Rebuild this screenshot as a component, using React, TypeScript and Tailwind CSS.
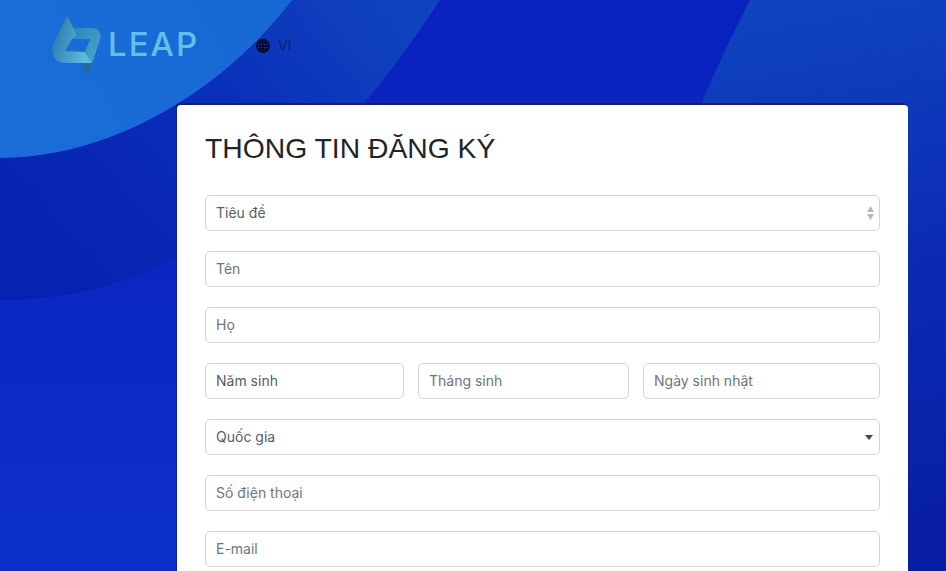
const inter = "font-['Inter',sans-serif]";
const fieldClass = `block h-9 w-full rounded-[5px] border border-[#d6d6d6] bg-white px-2.5 pb-[2px] text-[14px] text-[#565d64] outline-none placeholder:text-[#6c757d] ${inter}`;

function Field({ label, dark }: { label: string; dark?: boolean }) {
  return (
    <input
      className={dark ? `${fieldClass} placeholder:text-[#565d64]` : fieldClass}
      placeholder={label}
      aria-label={label}
    />
  );
}

function SelectBox({ label, arrow }: { label: string; arrow: "updown" | "down" }) {
  return (
    <div className="relative">
      <select className={`${fieldClass} appearance-none`} aria-label={label} defaultValue={label}>
        <option>{label}</option>
      </select>
      {arrow === "updown" ? (
        <svg className="pointer-events-none absolute right-[5px] top-[11px]" width="9" height="14" viewBox="0 0 9 14">
          <path d="M4.5 0 L8 6 H1 Z M1 8 H8 L4.5 14 Z" fill="#b8b8b8" />
        </svg>
      ) : (
        <svg className="pointer-events-none absolute right-[7px] top-[16px]" width="8" height="5" viewBox="0 0 8 5">
          <path d="M0 0 H8 L4 5 Z" fill="#444" />
        </svg>
      )}
    </div>
  );
}

function Backdrop() {
  return (
    <svg className="absolute inset-0 h-full w-full" viewBox="0 0 946 571" preserveAspectRatio="none">
      <defs>
        <linearGradient id="base" gradientUnits="userSpaceOnUse" x1="0" y1="0" x2="0" y2="571">
          <stop offset="0" stopColor="#0a22bf" />
          <stop offset="0.55" stopColor="#0a28c2" />
          <stop offset="1" stopColor="#0d30ca" />
        </linearGradient>
        <linearGradient id="right" gradientUnits="userSpaceOnUse" x1="800" y1="0" x2="900" y2="571">
          <stop offset="0" stopColor="#0f44bf" />
          <stop offset="0.45" stopColor="#0b2bb4" />
          <stop offset="1" stopColor="#071da2" />
        </linearGradient>
        <linearGradient id="mid" gradientUnits="userSpaceOnUse" x1="420" y1="20" x2="100" y2="300">
          <stop offset="0" stopColor="#1044be" />
          <stop offset="0.45" stopColor="#0a30ba" />
          <stop offset="1" stopColor="#0722b2" />
        </linearGradient>
        <linearGradient id="top" gradientUnits="userSpaceOnUse" x1="0" y1="158" x2="292" y2="0">
          <stop offset="0" stopColor="#1a6dd6" />
          <stop offset="1" stopColor="#1868d4" />
        </linearGradient>
      </defs>
      <rect width="946" height="571" fill="url(#base)" />
      <path d="M750 0 C725 50 712 78 702 103 L640 240 L620 571 H946 V0 Z" fill="url(#right)" />
      <path d="M0 0 H440 C290 230 140 300 0 300 Z" fill="url(#mid)" />
      <path d="M0 0 H292 C222 92 110 158 0 158 Z" fill="url(#top)" />
    </svg>
  );
}

function Logo() {
  return (
    <div className="flex w-[148px] items-center">
      <svg width="56" height="62" viewBox="0 0 56 62" className="shrink-0">
        <defs>
          <linearGradient id="lg1" x1="0" y1="0" x2="1" y2="0.35">
            <stop offset="0" stopColor="#2470a8" />
            <stop offset="1" stopColor="#5fbcd8" />
          </linearGradient>
          <linearGradient id="lg3" x1="0" y1="0" x2="1" y2="1">
            <stop offset="0" stopColor="#2f86b8" />
            <stop offset="1" stopColor="#4aa6cc" />
          </linearGradient>
        </defs>
        <path d="M15 2 L27 24 L20 25 L13 37 L33 38 L40 49 H14 C6 49 1 45 0.5 38 C0 34 1 31 3 27 Z" fill="url(#lg1)" />
        <path d="M21 14 H40 C47 14 50 20 48 26 L40 49 L33 38 L38 25 H20 L26 20 Z" fill="url(#lg3)" />
        <path d="M28 51 L40 49 L35 61 Z" fill="#28689c" />
      </svg>
      <span className="-mt-[1px] text-[33px] leading-none font-medium tracking-[2px] text-[#62c0e8] font-['Inter',sans-serif]">LEAP</span>
    </div>
  );
}

function Globe() {
  return (
    <svg width="14" height="14" viewBox="0 0 14 14" fill="none" stroke="#03061c" strokeWidth="1.4">
      <circle cx="7" cy="7" r="6.2" />
      <ellipse cx="7" cy="7" rx="3" ry="6.2" />
      <path d="M7 .8 V13.2 M.8 7 H13.2 M1.6 3.8 H12.4 M1.6 10.2 H12.4" />
    </svg>
  );
}

export default function App() {
  return (
    <div className="relative h-[571px] w-full overflow-hidden bg-[#0a27bf]">
      <Backdrop />
      <div className="relative flex h-[105px] items-start pl-[52px] pt-[14px]">
        <Logo />
        <div className={`ml-[56px] mt-[21px] flex items-center gap-2 text-[14px] text-[#15225c] ${inter}`}>
          <Globe />
          <span>VI</span>
        </div>
      </div>
      <div className="relative ml-[177px] w-[731px] rounded-t-[4px] bg-white px-7 pb-10 pt-[24px] shadow-[-1px_-2px_0_#0a1c98]">
        <h1 className="mb-[27px] h-[39px] text-[28.3px] leading-[39px] font-normal text-[#212529] font-['Liberation_Sans',sans-serif]">
          THÔNG TIN ĐĂNG KÝ
        </h1>
        <div className="flex flex-col gap-5">
          <SelectBox label="Tiêu đề" arrow="updown" />
          <Field label="Tên" />
          <Field label="Họ" />
          <div className="grid grid-cols-[199px_211px_237px] gap-[14px]">
            <Field label="Năm sinh" dark />
            <Field label="Tháng sinh" />
            <Field label="Ngày sinh nhật" />
          </div>
          <SelectBox label="Quốc gia" arrow="down" />
          <Field label="Số điện thoại" />
          <Field label="E-mail" />
        </div>
      </div>
    </div>
  );
}
